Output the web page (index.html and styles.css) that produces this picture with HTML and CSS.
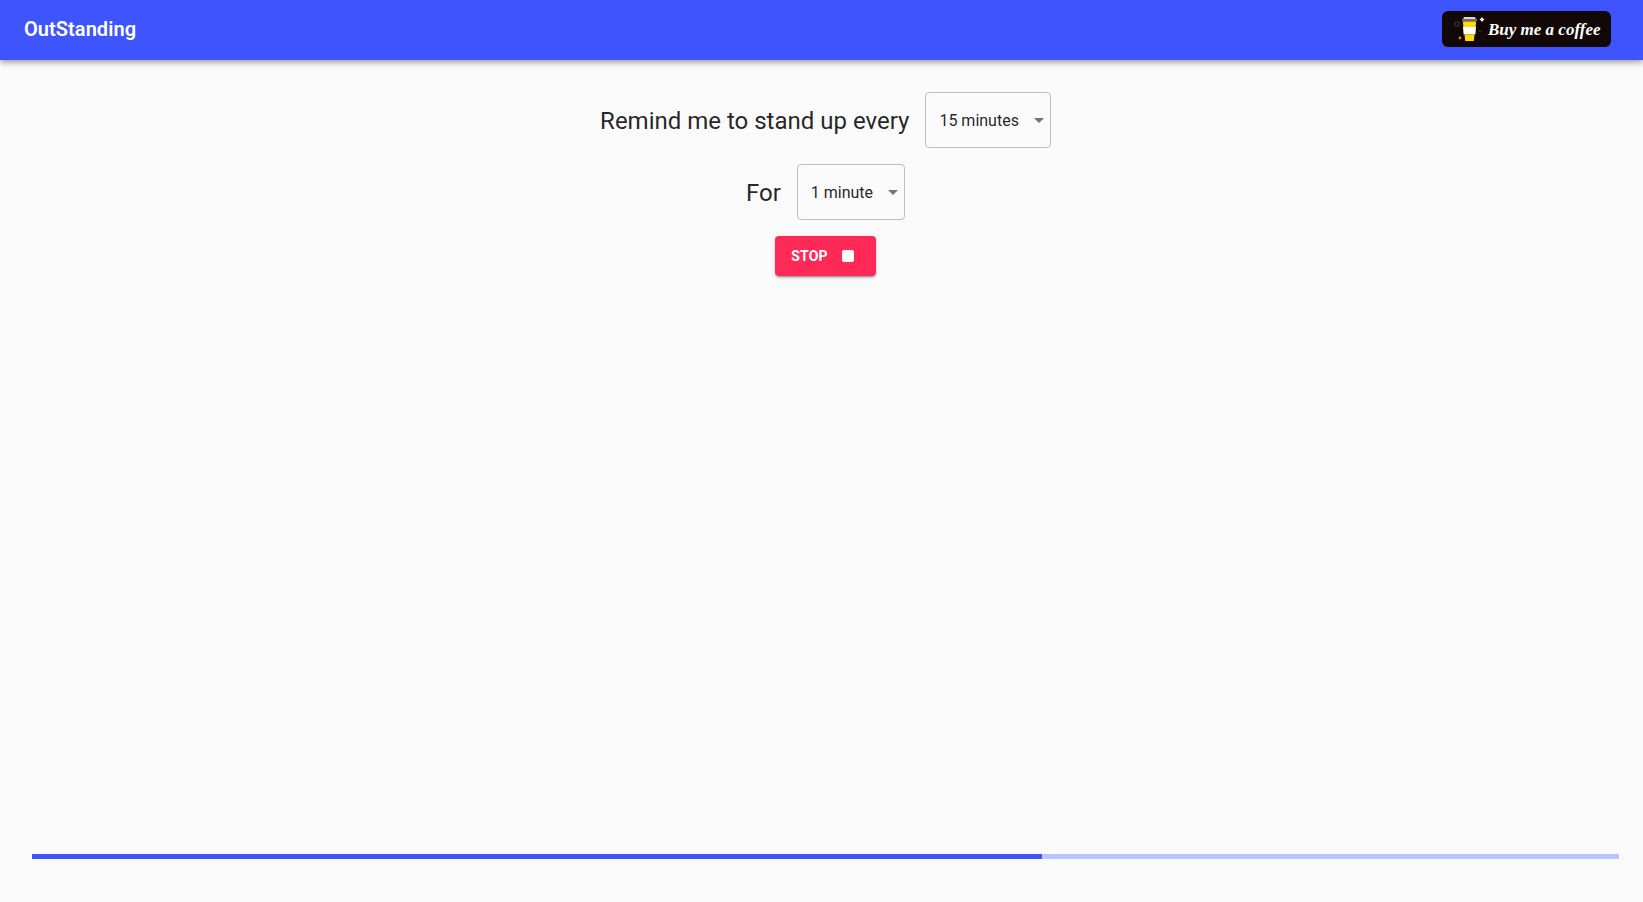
FILE: index.html
```html
<!DOCTYPE html>
<html lang="en">

<head>
    <meta charset="UTF-8">
    <meta name="viewport" content="width=device-width, initial-scale=1.0">
    <title>OutStanding</title>
    <link rel="stylesheet" href="styles.css">
</head>

<body>
    <header class="app-bar">
        <h1 class="app-title">OutStanding</h1>
        <a href="#" class="coffee-button">
            <svg class="coffee-logo" width="46" height="36" viewBox="0 0 46 36">
                <!-- Dots around the cup -->
                <circle cx="15" cy="13" r="2.2" fill="none" stroke="#3a3230" stroke-width="1.2"></circle>
                <circle cx="38" cy="20" r="1" fill="#3a3230"></circle>
                <circle cx="18" cy="27" r="1.4" fill="#e8702a"></circle>
                <path d="M40 6l1 1.500 1.500 1-1.500 1-1 1.500-1-1.500-1.500-1 1.500-1z" fill="#fff"></path>
                <!-- Cup -->
                <path d="M22 6h11l.8 2h-12.600z" fill="#d8d8d8"></path>
                <path d="M20 8h15v2.500H20z" fill="#6b6b6b"></path>
                <path d="M21 10.500h13l-.3 5.500H21.300z" fill="#ffdd00"></path>
                <path d="M21 16h13l-.6 7.500H21.600z" fill="#fff"></path>
                <path d="M22.500 23.500h10l-.7 6.500h-8.600z" fill="#ffdd00"></path>
            </svg>
            <span class="coffee-text">Buy me a coffee</span>
        </a>
    </header>

    <main class="content">
        <div class="setting-row">
            <span class="setting-label">Remind me to stand up every</span>
            <div class="select-box">
                <span>15 minutes</span>
                <svg class="select-arrow" width="24" height="24" viewBox="0 0 24 24">
                    <path d="M7 10l5 5 5-5z"></path>
                </svg>
            </div>
        </div>
        <div class="setting-row">
            <span class="setting-label">For</span>
            <div class="select-box">
                <span>1 minute</span>
                <svg class="select-arrow" width="24" height="24" viewBox="0 0 24 24">
                    <path d="M7 10l5 5 5-5z"></path>
                </svg>
            </div>
        </div>
        <button type="button" class="stop-button">
            STOP
            <svg class="stop-icon" width="24" height="24" viewBox="0 0 24 24">
                <path d="M8 6h8c1.100 0 2 .9 2 2v8c0 1.100-.9 2-2 2H8c-1.100 0-2-.9-2-2V8c0-1.100.9-2 2-2z"></path>
            </svg>
        </button>

        <div class="progress-track">
            <div class="progress-fill" style="width: 63.64%;"></div>
        </div>
    </main>
</body>

</html>
```

FILE: styles.css
```css
body {
    margin: 0;
    padding: 0;
    font-family: Roboto, Arial, sans-serif;
    background-color: #fafafa;
    color: rgba(0, 0, 0, 0.87);
    display: flex;
    flex-direction: column;
    height: 100vh;
    min-height: 902px;
}

.app-bar {
    background-color: #3d54fe;
    color: #fff;
    height: 60px;
    padding: 0 32px 0 24px;
    display: flex;
    align-items: center;
    justify-content: space-between;
    flex-shrink: 0;
    box-shadow: 0 2px 4px -1px rgba(0, 0, 0, 0.2), 0 4px 5px 0 rgba(0, 0, 0, 0.14), 0 1px 10px 0 rgba(0, 0, 0, 0.12);
}

.app-title {
    margin: 0;
    padding-bottom: 3px;
    font-size: 20px;
    font-weight: 600;
    letter-spacing: 0.05px;
    line-height: 1.6;
}

.coffee-button {
    width: 169px;
    height: 36px;
    margin-top: -3px;
    background-color: #120807;
    border-radius: 6px;
    display: flex;
    align-items: center;
    text-decoration: none;
}

.coffee-logo {
    flex-shrink: 0;
}

.coffee-text {
    color: #fff;
    font-family: "Liberation Serif", serif;
    font-style: italic;
    font-weight: bold;
    font-size: 17px;
    padding-top: 2px;
    white-space: nowrap;
}

.content {
    flex: 1;
    margin: 0 24px 0 32px;
    padding: 32px 0 43px;
    display: flex;
    flex-direction: column;
    align-items: center;
    gap: 16px;
}

.setting-row {
    display: flex;
    align-items: center;
    gap: 16px;
}

.setting-label {
    padding-top: 2px;
    font-size: 24px;
}

.select-box {
    position: relative;
    height: 56px;
    box-sizing: border-box;
    padding: 0 31px 0 13px;
    border: 1px solid #bdbdbd;
    border-radius: 4px;
    font-size: 16px;
    display: flex;
    align-items: center;
}

.select-arrow {
    position: absolute;
    top: 15px;
    right: -1px;
    fill: rgba(0, 0, 0, 0.54);
}

.stop-button {
    height: 40px;
    padding: 0 16px;
    border: none;
    border-radius: 4px;
    background-color: #ff2958;
    color: #fff;
    font-family: Roboto, Arial, sans-serif;
    font-size: 14px;
    font-weight: 700;
    letter-spacing: 0.2px;
    display: flex;
    align-items: center;
    gap: 8px;
    cursor: pointer;
    box-shadow: 0 3px 1px -2px rgba(0, 0, 0, 0.2), 0 2px 2px 0 rgba(0, 0, 0, 0.14), 0 1px 5px 0 rgba(0, 0, 0, 0.12);
}

.stop-icon {
    fill: #fff;
}

.progress-track {
    width: 100%;
    height: 5px;
    margin-top: auto;
    background-color: #b9c3ff;
}

.progress-fill {
    height: 100%;
    background-color: #3d54fe;
}
```
